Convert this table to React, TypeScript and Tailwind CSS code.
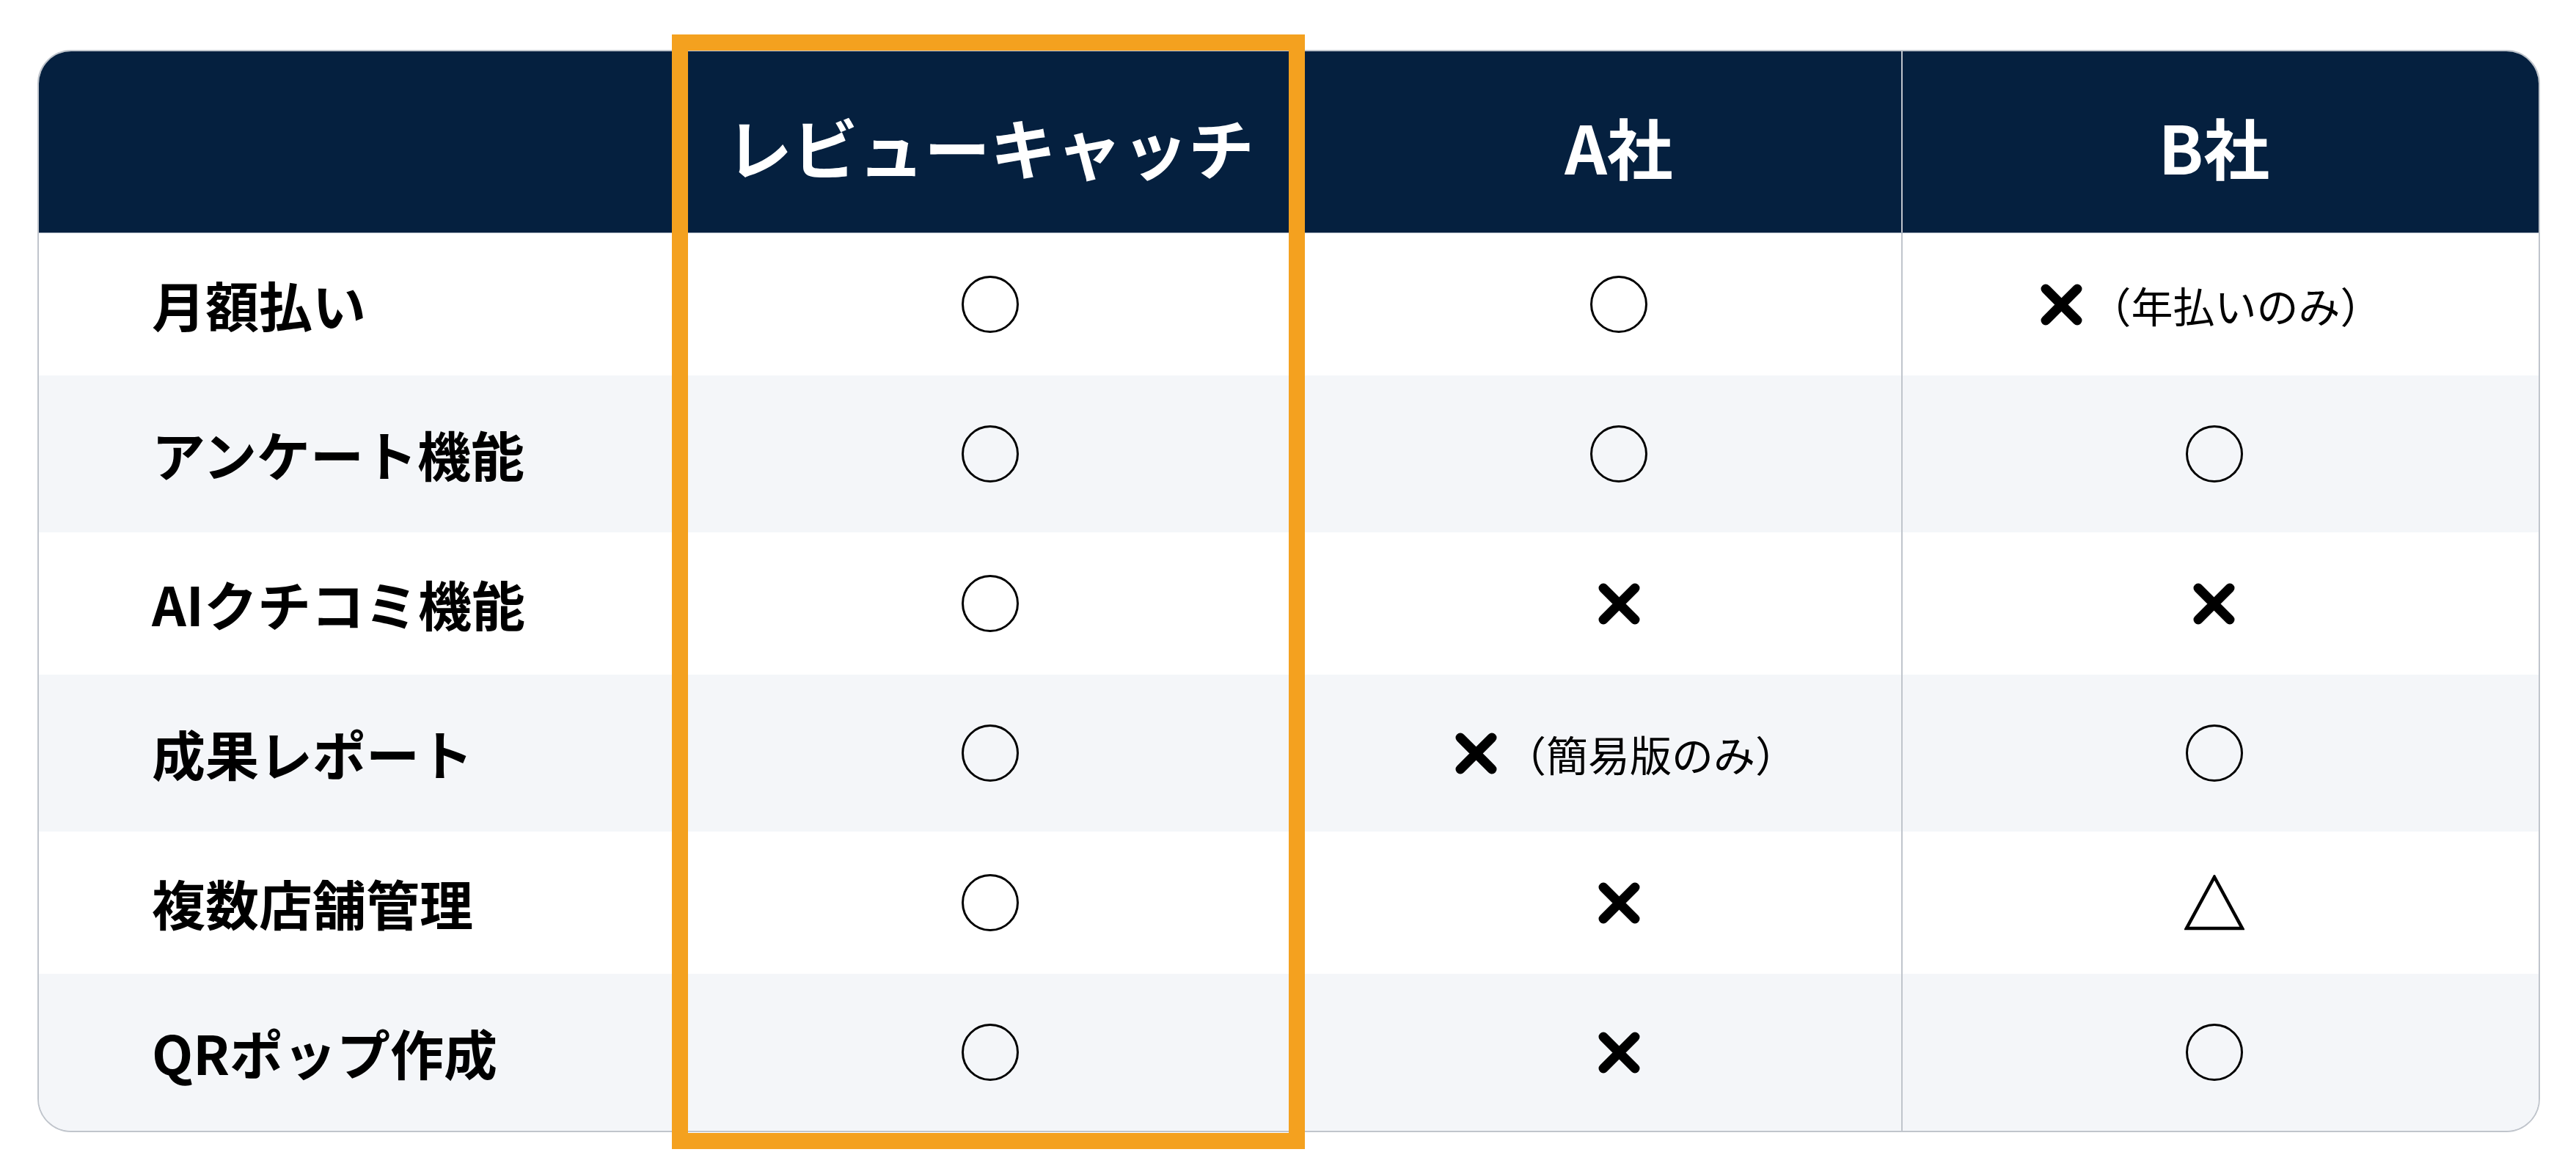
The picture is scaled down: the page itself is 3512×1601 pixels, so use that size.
import React from 'react'

type Mark = 'o' | 'x' | 'tri'
type Cell = { mark: Mark; note?: string }

const rows: { label: string; cells: Cell[] }[] = [
  { label: '月額払い', cells: [{ mark: 'o' }, { mark: 'o' }, { mark: 'x', note: '（年払いのみ）' }] },
  { label: 'アンケート機能', cells: [{ mark: 'o' }, { mark: 'o' }, { mark: 'o' }] },
  { label: 'AIクチコミ機能', cells: [{ mark: 'o' }, { mark: 'x' }, { mark: 'x' }] },
  { label: '成果レポート', cells: [{ mark: 'o' }, { mark: 'x', note: '（簡易版のみ）' }, { mark: 'o' }] },
  { label: '複数店舗管理', cells: [{ mark: 'o' }, { mark: 'x' }, { mark: 'tri' }] },
  { label: 'QRポップ作成', cells: [{ mark: 'o' }, { mark: 'x' }, { mark: 'o' }] },
]

function Circle() {
  return <div className="w-[78px] h-[78px] rounded-full border-[3.5px] border-black" />
}

function Cross() {
  return (
    <svg width="57" height="57" viewBox="0 0 57 57">
      <path d="M7 7 L50 50 M50 7 L7 50" stroke="#000" strokeWidth="13" strokeLinecap="round" />
    </svg>
  )
}

function Triangle() {
  return (
    <svg width="82" height="76" viewBox="0 0 82 76">
      <polygon points="41,3 79,73 3,73" fill="none" stroke="#000" strokeWidth="4.5" />
    </svg>
  )
}

function MarkCell({ mark, note, last }: Cell & { last: boolean }) {
  return (
    <div className="flex items-center justify-center gap-[10px]">
      {mark === 'o' && <Circle />}
      {mark === 'x' && <Cross />}
      {mark === 'tri' && <Triangle />}
      {note && (
        <span className={'text-[57px] font-normal text-black leading-none' + (last ? ' mr-[8px]' : ' mr-[-20px]')}>
          {note}
        </span>
      )}
    </div>
  )
}

export default function App() {
  return (
    <div className="w-[3512px] h-[1601px] bg-white pt-[68px] pl-[51px] font-['Noto_Sans_CJK_JP',sans-serif]">
      <div className="relative w-[3412px]">
        <div className="rounded-[46px] border-2 border-[#c0c5cc] overflow-hidden">
          <div className="grid grid-cols-[825px_944px_770px_869px] h-[248px] bg-[#05203f] text-white font-bold text-[90px] border-b border-[#9aa6b4]">
            <div />
            <div className="flex items-center justify-center pt-[12px]">レビューキャッチ</div>
            <div className="flex items-center justify-center pt-[12px]">A社</div>
            <div className="flex items-center justify-center pt-[12px] pr-[18px] border-l-2 border-[#c0c5cc]">B社</div>
          </div>
          {rows.map((row, i) => (
            <div
              key={row.label}
              className={
                'grid grid-cols-[825px_944px_770px_869px] ' +
                (i % 2 === 0 ? 'bg-white h-[194px]' : 'bg-[#f4f6f9] h-[214px]')
              }
            >
              <div className="flex items-center pl-[154px] text-[73px] font-bold text-black">{row.label}</div>
              {row.cells.map((c, j) => (
                <div
                  key={j}
                  className={
                    'flex items-center justify-center' + (j === 2 ? ' pr-[18px] border-l-2 border-[#c0c5cc]' : '')
                  }
                >
                  <MarkCell {...c} last={j === 2} />
                </div>
              ))}
            </div>
          ))}
        </div>
        <div className="absolute left-[865px] top-[-21px] w-[863px] h-[1520px] border-[22px] border-[#f4a11f]" />
      </div>
    </div>
  )
}
